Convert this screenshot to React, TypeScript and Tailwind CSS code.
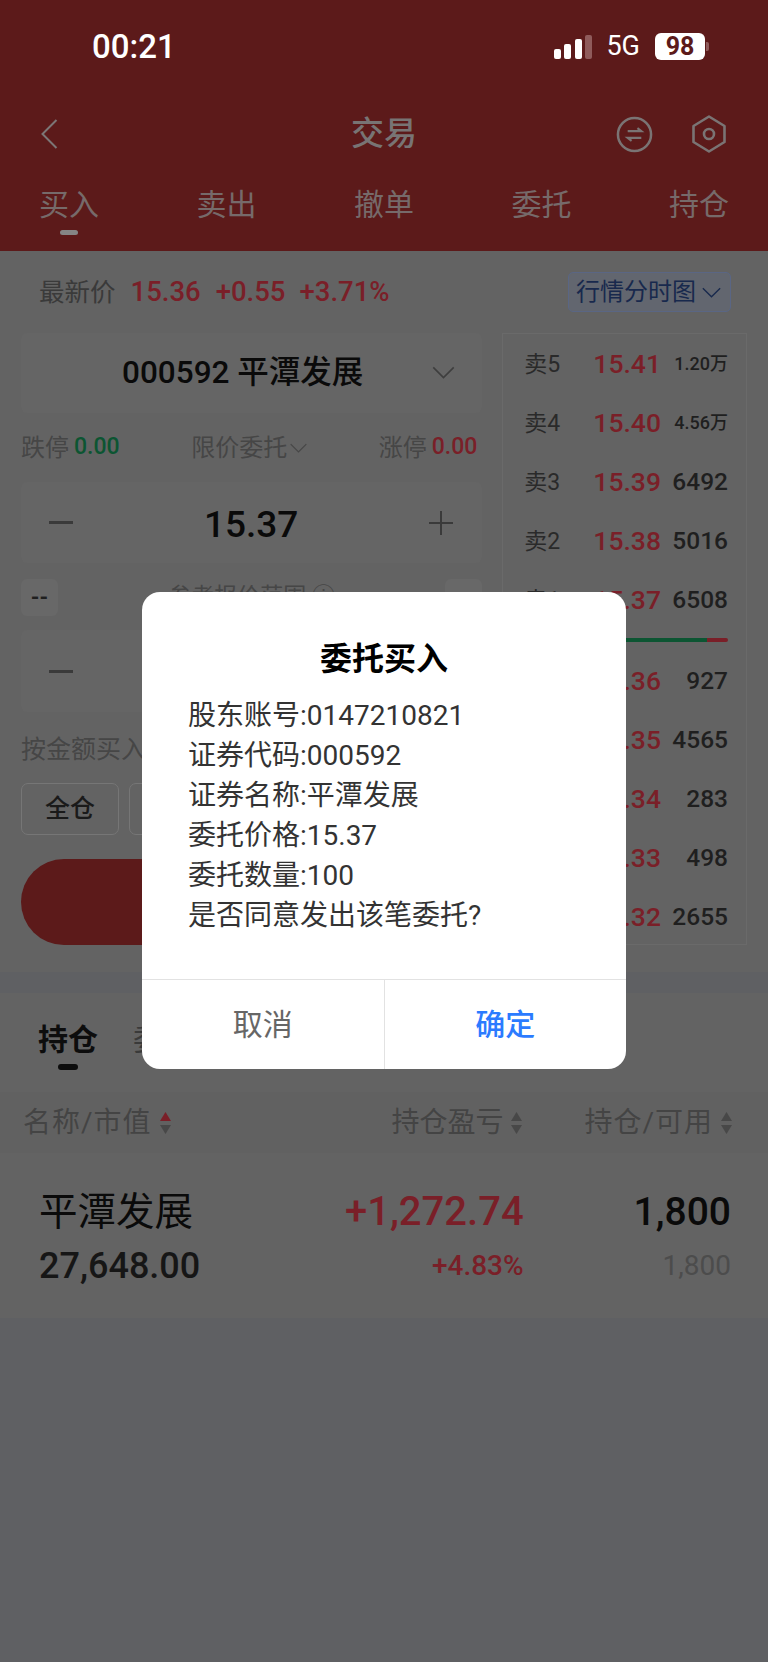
import React from "react";

const tabs = ["买入", "卖出", "撤单", "委托", "持仓"];

const asks = [
  { label: "卖5", price: "15.41", vol: "1.20万", small: true },
  { label: "卖4", price: "15.40", vol: "4.56万", small: true },
  { label: "卖3", price: "15.39", vol: "6492" },
  { label: "卖2", price: "15.38", vol: "5016" },
  { label: "卖1", price: "15.37", vol: "6508" },
];

const bids = [
  { label: "买1", price: "15.36", vol: "927" },
  { label: "买2", price: "15.35", vol: "4565" },
  { label: "买3", price: "15.34", vol: "283" },
  { label: "买4", price: "15.33", vol: "498" },
  { label: "买5", price: "15.32", vol: "2655" },
];

const confirmLines = [
  "股东账号:0147210821",
  "证券代码:000592",
  "证券名称:平潭发展",
  "委托价格:15.37",
  "委托数量:100",
  "是否同意发出该笔委托?",
];

function Chevron({ className }: { className?: string }) {
  return (
    <svg viewBox="0 0 24 14" className={className} fill="none" stroke="currentColor" strokeWidth="1.7">
      <path d="M1 1.5 12 12.5 23 1.5" />
    </svg>
  );
}

function SortMark({ up = "#484848", down = "#484848" }: { up?: string; down?: string }) {
  return (
    <svg viewBox="0 0 11 22" className="h-[22px] w-[11px]">
      <path d="M5.5 0 11 9H0Z" fill={up} />
      <path d="M5.5 22 11 13H0Z" fill={down} />
    </svg>
  );
}

function BookRow({ row }: { row: { label: string; price: string; vol: string; small?: boolean } }) {
  return (
    <div className="grid h-[59px] shrink-0 grid-cols-[69px_1fr_auto] items-center pl-[21px] pr-[18px]">
      <span className="pt-[3px] text-[23px] text-[#2a2a2a]">{row.label}</span>
      <span className="text-[26.5px] font-medium text-[#7a1f28]">{row.price}</span>
      <span className={row.small ? "text-[18px] font-medium text-[#1f1f1f]" : "pt-[1px] text-[24.5px] font-medium text-[#1f1f1f]"}>{row.vol}</span>
    </div>
  );
}

export default function App() {
  return (
    <div className="relative flex h-[1662px] w-[768px] flex-col overflow-hidden bg-[#5f6063] font-['Roboto','Noto_Sans_CJK_SC',sans-serif]">
      {/* Red header with status bar, nav and trade tabs */}
      <header className="flex h-[251px] flex-col bg-[#5c1a1a]">
        <div className="flex h-[91px] items-center justify-between pl-[92px] pr-[59px] pt-[2px]">
          <span className="text-[33px] font-medium leading-none text-white">00:21</span>
          <div className="flex items-center">
            <div className="flex h-[24px] items-end gap-[3.5px]">
              <span className="h-[10px] w-[7px] rounded-[2px] bg-white" />
              <span className="h-[15px] w-[7px] rounded-[2px] bg-white" />
              <span className="h-[20px] w-[7px] rounded-[2px] bg-white" />
              <span className="h-[24px] w-[7px] rounded-[2px] bg-[#8f5b5b]" />
            </div>
            <span className="ml-[14px] text-[27px] leading-none text-white">5G</span>
            <div className="ml-[15px] flex h-[27px] w-[50px] items-center justify-center rounded-[6px] bg-white text-[25px] font-bold leading-none text-[#5c1a1a]">
              98
            </div>
            <span className="ml-[1px] h-[9px] w-[3px] rounded-r-[2px] bg-[#8f5b5b]" />
          </div>
        </div>
        <div className="relative flex h-[86px] items-center justify-center">
          <svg viewBox="0 0 17 30" className="absolute left-[41px] top-[28px] h-[30px] w-[17px]" fill="none" stroke="#7c7676" strokeWidth="2">
            <path d="M15.5 1 1.5 15 15.5 29" />
          </svg>
          <span className="text-[33px] font-medium text-[#787474]">交易</span>
          <svg viewBox="0 0 38 38" className="absolute left-[616px] top-[25px] h-[37px] w-[37px]" fill="none" stroke="#7a7474" strokeWidth="2.6">
            <circle cx="19" cy="19" r="17" />
            <path d="M12 15.5h14l-4-3" strokeWidth="2.2" />
            <path d="M26 22.5H12l4 3" strokeWidth="2.2" />
          </svg>
          <svg viewBox="0 0 34 38" className="absolute left-[692px] top-[24px] h-[38px] w-[34px]" fill="none" stroke="#7a7474" strokeWidth="2.6">
            <path d="M17 1.5 32.5 11v16L17 36.5 1.5 27V11Z" strokeLinejoin="round" />
            <circle cx="17" cy="19" r="5" />
          </svg>
        </div>
        <nav className="flex justify-between px-[39px] pt-[8px]">
          {tabs.map((t, i) => (
            <div key={t} className="flex w-[60px] flex-col items-center">
              <span className="text-[30px] leading-[40px] text-[#766a6a]">{t}</span>
              {i === 0 && <span className="mt-[5px] h-[5px] w-[18px] rounded-full bg-[#858585]" />}
            </div>
          ))}
        </nav>
      </header>

      {/* Order entry */}
      <section className="flex h-[721px] flex-col bg-[#636363]">
        <div className="flex h-[82px] items-center justify-between pl-[39px] pr-[37px]">
          <div className="flex items-center text-[27.5px] font-medium">
            <span className="text-[25.5px] font-normal text-[#3a3a3a]">最新价</span>
            <span className="ml-[15px] text-[#7a1f28]">15.36</span>
            <span className="ml-[15px] text-[#7a1f28]">+0.55</span>
            <span className="ml-[14px] text-[#7a1f28]">+3.71%</span>
          </div>
          <div className="flex h-[40px] w-[163px] items-center gap-[6px] rounded-[5px] border border-[#5a6684] bg-[#62666f] pl-[7px] text-[24px] text-[#18294d]">
            <span>行情分时图</span>
            <Chevron className="h-[11px] w-[19px]" />
          </div>
        </div>

        <div className="flex gap-[20px] pl-[21px] pr-[21px]">
          <div className="flex w-[462px] flex-col">
            <div className="relative flex h-[80px] items-center justify-center rounded-[6px] bg-[#656565] pr-[18px] text-[31.5px] font-medium text-[#0a0a0a]">
              <span>000592 平潭发展</span>
              <Chevron className="absolute right-[27px] top-[33px] h-[13px] w-[23px] text-[#3e3e3e]" />
            </div>
            <div className="flex h-[69px] items-center justify-between pr-[5px] text-[24px]">
              <span className="flex items-center gap-[5px] text-[#464646]">
                跌停
                <span className="text-[23px] font-medium text-[#0c5532]">0.00</span>
              </span>
              <span className="flex items-center gap-[3px] text-[#464646]">
                限价委托
                <Chevron className="h-[10px] w-[17px]" />
              </span>
              <span className="flex items-center gap-[5px] text-[#464646]">
                涨停
                <span className="text-[23px] font-medium text-[#7a1f28]">0.00</span>
              </span>
            </div>
            <div className="flex h-[81px] items-center justify-between rounded-[6px] bg-[#656565] pl-[28px] pr-[29px]">
              <span className="h-[3px] w-[24px] bg-[#3a3a3a]" />
              <span className="pt-[4px] text-[37px] font-medium text-[#0a0a0a]">15.37</span>
              <span className="relative h-[24px] w-[24px]">
                <span className="absolute left-0 top-[11px] h-[2px] w-[24px] bg-[#3a3a3a]" />
                <span className="absolute left-[11px] top-0 h-[24px] w-[2px] bg-[#3a3a3a]" />
              </span>
            </div>
            <div className="flex h-[67px] items-start justify-between pt-[16px]">
              <span className="flex h-[37px] w-[37px] items-center justify-center rounded-[6px] bg-[#686868] text-[22px] font-bold text-[#1f1f1f]">
                --
              </span>
              <span className="pt-[5px] text-[23px] leading-[26px] text-[#464646]">参考报价范围 ⓘ</span>
              <span className="h-[37px] w-[37px] rounded-[6px] bg-[#686868]" />
            </div>
            <div className="flex h-[82px] items-center rounded-[6px] bg-[#656565] pl-[28px]">
              <span className="h-[3px] w-[24px] bg-[#3a3a3a]" />
            </div>
            <div className="flex h-[71px] items-center pt-[4px] text-[25px] text-[#464646]">按金额买入</div>
            <div className="flex gap-[10px]">
              <div className="flex h-[52px] w-[98px] items-center justify-center rounded-[7px] border border-[#767676] text-[25px] font-medium text-[#1a1a1a]">
                全仓
              </div>
              <div className="h-[52px] w-[98px] rounded-[7px] border border-[#767676]" />
            </div>
            <div className="mt-[24px] h-[86px] rounded-full bg-[#5c1a1a]" />
          </div>

          {/* Five-level order book */}
          <div className="flex h-[612px] w-[245px] flex-col border border-[#6a6a6a]">
            {asks.map((r) => (
              <BookRow key={r.label} row={r} />
            ))}
            <div className="flex h-[22px] shrink-0 items-center justify-end pr-[18px]">
              <span className="h-[4px] w-[160px] rounded-l-full bg-[#0c5532]" />
              <span className="h-[4px] w-[21px] rounded-r-full bg-[#7a1f28]" />
            </div>
            {bids.map((r) => (
              <BookRow key={r.label} row={r} />
            ))}
          </div>
        </div>
      </section>

      <div className="h-[21px] shrink-0" />

      {/* Holdings */}
      <section className="flex h-[325px] flex-col bg-[#636363]">
        <div className="flex h-[99px] gap-[35px] pl-[38px] pt-[27px]">
          <div className="flex w-[60px] flex-col items-center">
            <span className="text-[30px] font-semibold leading-[40px] text-[#0d0d0d]">持仓</span>
            <span className="mt-[4px] h-[6px] w-[20px] rounded-full bg-[#0d0d0d]" />
          </div>
          <span className="text-[30px] leading-[40px] text-[#3a3a3a]">委托</span>
        </div>
        <div className="flex h-[61px] items-center bg-[#616161] pl-[23px] pr-[36px] text-[28px] text-[#444444]">
          <span className="tracking-[1px]">名称/市值</span>
          <span className="ml-[8px]">
            <SortMark up="#7a1f28" />
          </span>
          <span className="ml-auto">持仓盈亏</span>
          <span className="ml-[8px]">
            <SortMark />
          </span>
          <span className="ml-[62px] tracking-[1px]">持仓/可用</span>
          <span className="ml-[8px]">
            <SortMark />
          </span>
        </div>
        <div className="flex flex-1 pl-[39px] pr-[37px] pt-[32px]">
          <div className="flex flex-col">
            <span className="text-[38.5px] leading-[54px] text-[#0a0a0a]">平潭发展</span>
            <span className="text-[36px] font-medium leading-[54px] text-[#161616]">27,648.00</span>
          </div>
          <div className="ml-auto flex flex-col items-end">
            <span className="text-[40px] font-medium leading-[54px] text-[#7a1f28]">+1,272.74</span>
            <span className="text-[28px] font-medium leading-[54px] text-[#7a1f28]">+4.83%</span>
          </div>
          <div className="ml-[110px] flex flex-col items-end">
            <span className="text-[39px] font-medium leading-[54px] text-[#0a0a0a]">1,800</span>
            <span className="text-[28px] leading-[54px] text-[#4c4c4c]">1,800</span>
          </div>
        </div>
      </section>

      {/* Confirmation dialog */}
      <div className="absolute left-[142px] top-[592px] flex h-[477px] w-[484px] flex-col overflow-hidden rounded-[18px] bg-white">
        <h2 className="pt-[45px] text-center text-[32px] font-semibold leading-[44px] text-black">委托买入</h2>
        <div className="flex-1 pl-[46px] pt-[15px]">
          {confirmLines.map((l) => (
            <p key={l} className="text-[28px] leading-[40px] text-[#333333]">
              {l}
            </p>
          ))}
        </div>
        <div className="flex h-[90px] border-t border-[#e2e2e2] text-[30px]">
          <button className="flex-1 border-r border-[#e2e2e2] text-[#666666]">取消</button>
          <button className="flex-1 font-medium text-[#2b7bff]">确定</button>
        </div>
      </div>
    </div>
  );
}
